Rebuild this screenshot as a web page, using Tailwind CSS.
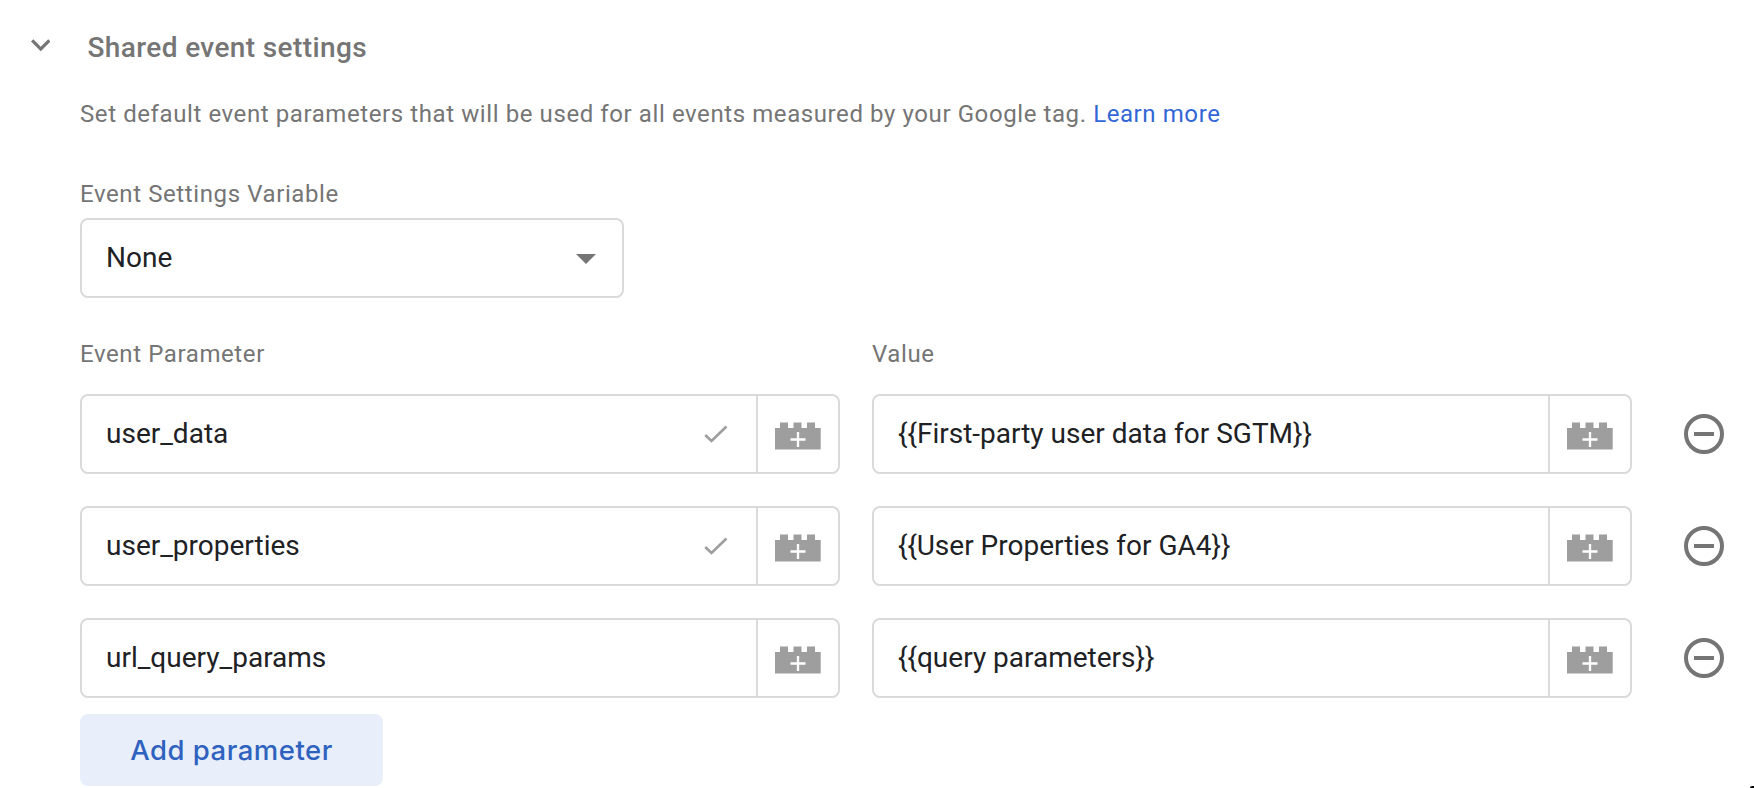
<!DOCTYPE html>
<html lang="en">
<head>
<meta charset="utf-8">
<title>Shared event settings</title>
<script src="https://cdn.jsdelivr.net/npm/@tailwindcss/browser@4"></script>
</head>
<body class="relative h-[788px] overflow-hidden bg-white font-['Roboto',sans-serif] text-[#757575]">
<svg width="0" height="0" class="absolute">
  <symbol id="brick" viewBox="0 0 46 28"><path fill="#9e9e9e" d="M0 6h5V.5h8V6h5.500V.5h8V6h5.500V.5h8V6h5.700v21.500H0z"/><path d="M15.500 17.500h15M23 10v15" stroke="#fff" stroke-width="2.300"/></symbol>
  <symbol id="check" viewBox="0 0 24 18"><path d="M1.200 10l6.300 6L22.500 1.500" fill="none" stroke="#9e9e9e" stroke-width="2.600"/></symbol>
  <symbol id="minus" viewBox="0 0 40 40"><circle cx="20" cy="20" r="18" fill="none" stroke="#757575" stroke-width="4"/><path d="M10 20h20" stroke="#757575" stroke-width="4"/></symbol>
</svg>
<header class="flex h-[63px] items-start pt-[32px]">
  <svg class="mt-[7px] ml-[30.500px] h-[12.500px] w-[19.500px]" viewBox="6 8.590 12 7.410"><path fill="#757575" d="M7.410 8.590 12 13.170l4.590-4.580L18 10l-6 6-6-6z"/></svg>
  <h2 class="ml-[37.500px] text-[28px] leading-[32px] font-medium tracking-[0.38px]">Shared event settings</h2>
</header>
<main class="pl-20">
  <p class="mt-[35px] text-2xl leading-[32px] tracking-[0.59px] whitespace-nowrap">Set default event parameters that will be used for all events measured by your Google tag. <a class="text-[#3367d6]">Learn more</a></p>
  <label class="mt-12 block text-2xl leading-[32px] tracking-[0.6px]">Event Settings Variable</label>
  <div class="mt-2 flex h-20 w-[544px] items-center justify-between rounded-lg border-2 border-[#dadada] pr-[26px] pl-6 text-[28px] text-[#202124]">
    <span>None</span>
    <svg class="mt-[2px] h-[10px] w-5" viewBox="0 0 20 10"><path fill="#757575" d="M0 0h20L10 10z"/></svg>
  </div>
  <div class="mt-10 flex gap-8 text-2xl leading-[32px] tracking-[0.6px]">
    <div class="w-[760px]">Event Parameter</div>
    <div>Value</div>
  </div>
  <div class="mt-6 flex flex-col gap-8 text-[28px] text-[#202124]">
    <div class="flex items-center">
      <div class="flex h-20 w-[760px] rounded-lg border-2 border-[#dadada]"><div class="flex flex-1 items-center justify-between pr-7 pl-6"><span>user_data</span><svg class="h-[18px] w-6"><use href="#check"/></svg></div><div class="flex w-[82px] items-center justify-center border-l-2 border-[#dadada]"><svg class="mt-1 h-7 w-[46px]"><use href="#brick"/></svg></div></div>
      <div class="ml-8 flex h-20 w-[760px] rounded-lg border-2 border-[#dadada]"><div class="flex flex-1 items-center pl-6"><span>{{First-party user data for SGTM}}</span></div><div class="flex w-[82px] items-center justify-center border-l-2 border-[#dadada]"><svg class="mt-1 h-7 w-[46px]"><use href="#brick"/></svg></div></div>
      <svg class="ml-[52px] h-10 w-10"><use href="#minus"/></svg>
    </div>
    <div class="flex items-center">
      <div class="flex h-20 w-[760px] rounded-lg border-2 border-[#dadada]"><div class="flex flex-1 items-center justify-between pr-7 pl-6"><span>user_properties</span><svg class="h-[18px] w-6"><use href="#check"/></svg></div><div class="flex w-[82px] items-center justify-center border-l-2 border-[#dadada]"><svg class="mt-1 h-7 w-[46px]"><use href="#brick"/></svg></div></div>
      <div class="ml-8 flex h-20 w-[760px] rounded-lg border-2 border-[#dadada]"><div class="flex flex-1 items-center pl-6"><span>{{User Properties for GA4}}</span></div><div class="flex w-[82px] items-center justify-center border-l-2 border-[#dadada]"><svg class="mt-1 h-7 w-[46px]"><use href="#brick"/></svg></div></div>
      <svg class="ml-[52px] h-10 w-10"><use href="#minus"/></svg>
    </div>
    <div class="flex items-center">
      <div class="flex h-20 w-[760px] rounded-lg border-2 border-[#dadada]"><div class="flex flex-1 items-center pl-6"><span>url_query_params</span></div><div class="flex w-[82px] items-center justify-center border-l-2 border-[#dadada]"><svg class="mt-1 h-7 w-[46px]"><use href="#brick"/></svg></div></div>
      <div class="ml-8 flex h-20 w-[760px] rounded-lg border-2 border-[#dadada]"><div class="flex flex-1 items-center pl-6"><span>{{query parameters}}</span></div><div class="flex w-[82px] items-center justify-center border-l-2 border-[#dadada]"><svg class="mt-1 h-7 w-[46px]"><use href="#brick"/></svg></div></div>
      <svg class="ml-[52px] h-10 w-10"><use href="#minus"/></svg>
    </div>
  </div>
  <button class="mt-4 flex h-[72px] w-[303px] items-center justify-center rounded-lg bg-[#e8effb] pt-[2px] font-['Inter',sans-serif] text-[27.500px] font-medium tracking-[0.5px] text-[#2f62bf]">Add parameter</button>
</main>
<div class="absolute right-0 bottom-0 h-[2px] w-1 rounded-tl-sm bg-black"></div>
</body>
</html>
